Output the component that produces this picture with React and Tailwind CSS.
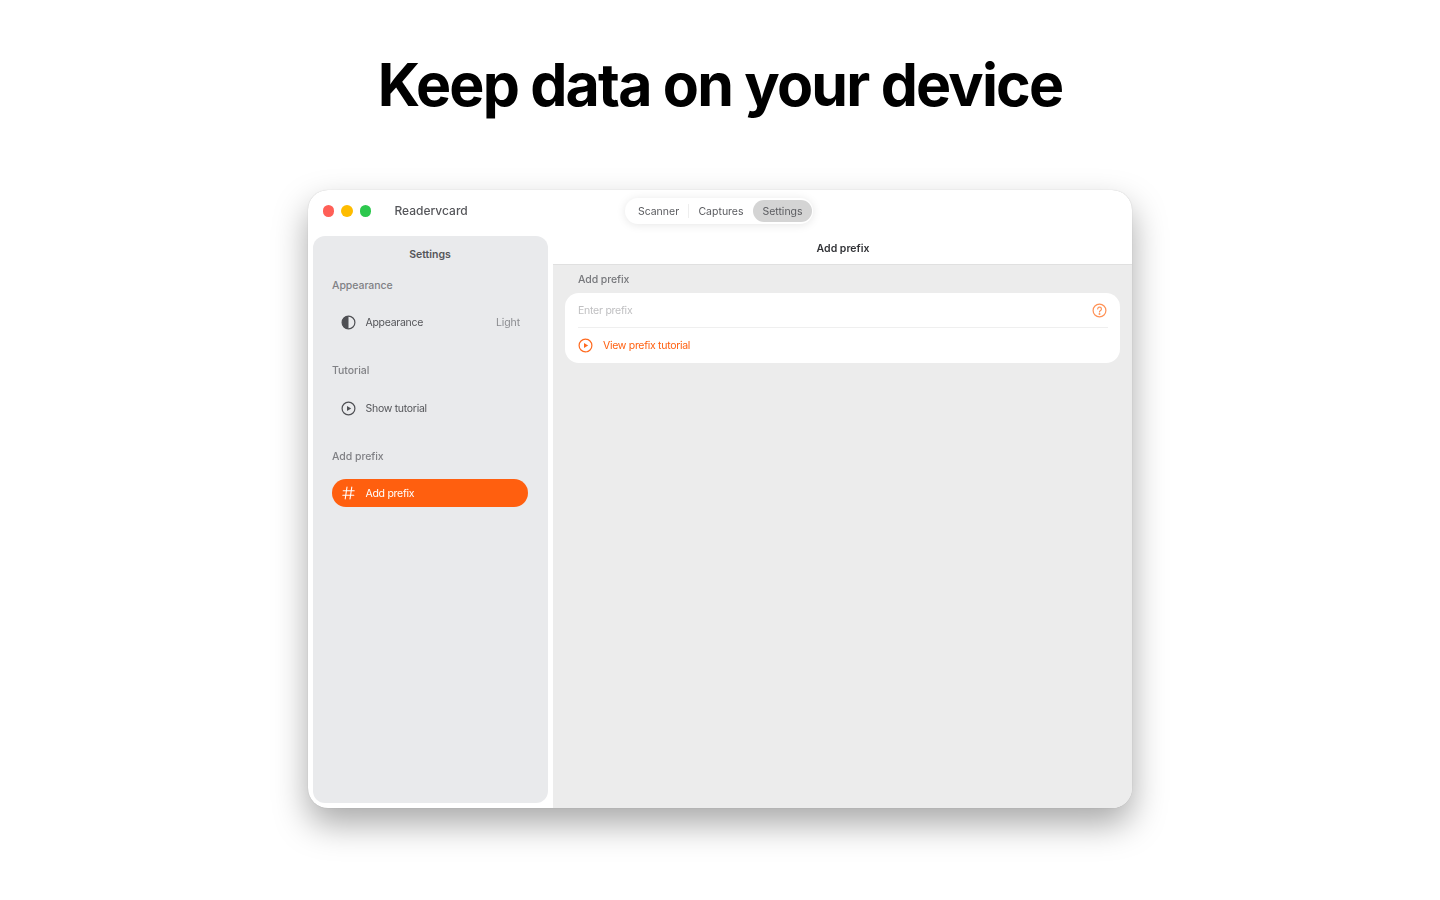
function Row({ icon, label, right, active }) {
  return (
    <div className={`flex h-[28px] items-center rounded-full pl-[8px] pr-[8px] text-[10.5px] tracking-[-0.28px] ${active ? "bg-[#ff5f0f] text-white" : "text-[#55565a]"}`}>
      <span className="flex w-[17px] justify-center">{icon}</span>
      <span className="ml-[8.5px] pt-[2px]">{label}</span>
      {right && <span className="ml-auto pt-[2px] tracking-[-0.1px] text-[#8b8c90]">{right}</span>}
    </div>
  );
}

function Section({ title, children, className, gap }) {
  return (
    <div className={className}>
      <div className="h-[15px] pt-px text-[10.5px] font-medium leading-[14px] tracking-[-0.05px] text-[#808185]">{title}</div>
      <div className={gap}>{children}</div>
    </div>
  );
}

function PlayIcon({ color, size = 15 }) {
  return (
    <svg width={size} height={size} viewBox="0 0 15 15" fill="none">
      <circle cx="7.5" cy="7.5" r="6.4" stroke={color} strokeWidth="1.2" />
      <path d="M6 4.9v5.2l4.2-2.6z" fill={color} />
    </svg>
  );
}

export default function App() {
  return (
    <div className="flex h-[900px] w-[1440px] flex-col items-center overflow-hidden bg-white font-['Inter',sans-serif]">
      <h1 className="mt-[49px] h-[72px] text-[59px] font-bold leading-[72px] tracking-[-1.8px] text-black">Keep data on your device</h1>
      <div className="mt-[69px] flex h-[618px] w-[824px] flex-col overflow-hidden rounded-[20px] bg-white shadow-[0_16px_34px_rgba(0,0,0,0.34),0_0_1px_rgba(0,0,0,0.25)] [filter:blur(0.25px)]">
        <div className="relative flex h-[46px] shrink-0 items-center pb-[4px] pl-[14.5px]">
          <span className="h-[11.5px] w-[11.5px] rounded-full bg-[#ff5f57]" />
          <span className="ml-[7.3px] h-[11.5px] w-[11.5px] rounded-full bg-[#febc00]" />
          <span className="ml-[7.2px] h-[11.5px] w-[11.5px] rounded-full bg-[#2cc84d]" />
          <span className="ml-[23px] text-[12px] font-medium text-[#55565a]">Readervcard</span>
          <div className="absolute left-[317px] top-[8px] flex h-[26px] w-[188px] items-center rounded-full bg-white pl-[4px] text-[10.5px] text-[#5b5c60] shadow-[0_1px_10px_rgba(0,0,0,0.10)]">
            <span className="w-[59px] pt-[2px] text-center">Scanner</span>
            <span className="h-[14px] w-px bg-[#eeeeee]" />
            <span className="w-[64px] pt-[2px] text-center">Captures</span>
            <span className="flex h-[22px] w-[59px] items-center justify-center rounded-full bg-[#d4d4d4] pt-[2px]">Settings</span>
          </div>
        </div>
        <div className="flex min-h-0 flex-1">
          <aside className="mb-[5px] ml-[5px] w-[235px] shrink-0 rounded-[12px] bg-[#e9eaec] pl-[19px] pr-[20px] pt-[11px]">
            <div className="h-[15px] text-center text-[10.5px] font-semibold leading-[15px] text-[#55565a]">Settings</div>
            <Section title="Appearance" className="mt-[16px]" gap="mt-[15px]">
              <Row
                label="Appearance"
                right="Light"
                icon={
                  <svg width="15" height="15" viewBox="0 0 15 15" fill="none">
                    <circle cx="7.5" cy="7.5" r="6.4" stroke="#4f5054" strokeWidth="1.2" />
                    <path d="M7.5 1.1a6.4 6.4 0 0 0 0 12.8z" fill="#4f5054" />
                  </svg>
                }
              />
            </Section>
            <Section title="Tutorial" className="mt-[27px]" gap="mt-[16px]">
              <Row label="Show tutorial" icon={<PlayIcon color="#4f5054" />} />
            </Section>
            <Section title="Add prefix" className="mt-[27px]" gap="mt-[15px]">
              <Row
                active
                label="Add prefix"
                icon={
                  <svg width="13" height="14" viewBox="0 0 13 14" fill="none" stroke="white" strokeWidth="1.1" strokeLinecap="round">
                    <path d="M5 1 3.2 13M9.8 1 8 13M1.2 4.7h11M.8 9.3h11" />
                  </svg>
                }
              />
            </Section>
          </aside>
          <div className="ml-[5px] flex min-w-0 flex-1 flex-col">
            <div className="flex h-[29px] shrink-0 items-start justify-center border-b border-[#e0e0e0] bg-white pl-px pt-[5px] text-[10.5px] font-semibold leading-[15px] text-[#303135]">Add prefix</div>
            <div className="flex-1 bg-[#ececec] px-[12px] pt-[7px]">
              <div className="h-[14px] pl-[13px] pt-px text-[10.5px] font-medium leading-[14px] tracking-[-0.1px] text-[#77787c]">Add prefix</div>
              <div className="mt-[7px] h-[70px] rounded-[14px] bg-white pl-[13px] pr-[12px]">
                <div className="flex h-[35px] items-center justify-between border-b border-[#efefef] text-[10.5px] tracking-[-0.25px] text-[#c0c0c2]">
                  <span className="pt-[2px]">Enter prefix</span>
                  <svg className="mr-px" width="15" height="15" viewBox="0 0 15 15" fill="none" stroke="#ff9155" strokeWidth="1.2" strokeLinecap="round">
                    <circle cx="7.5" cy="7.5" r="6.4" />
                    <path d="M5.7 5.9a1.85 1.85 0 1 1 2.8 1.6c-.6.4-1 .7-1 1.4" />
                    <circle cx="7.5" cy="11" r=".35" fill="#ff9155" />
                  </svg>
                </div>
                <div className="flex h-[35px] items-center text-[10.5px] tracking-[-0.3px] text-[#ff5f0f]">
                  <PlayIcon color="#ff6a1f" />
                  <span className="ml-[10px]">View prefix tutorial</span>
                </div>
              </div>
            </div>
          </div>
        </div>
      </div>
    </div>
  );
}
